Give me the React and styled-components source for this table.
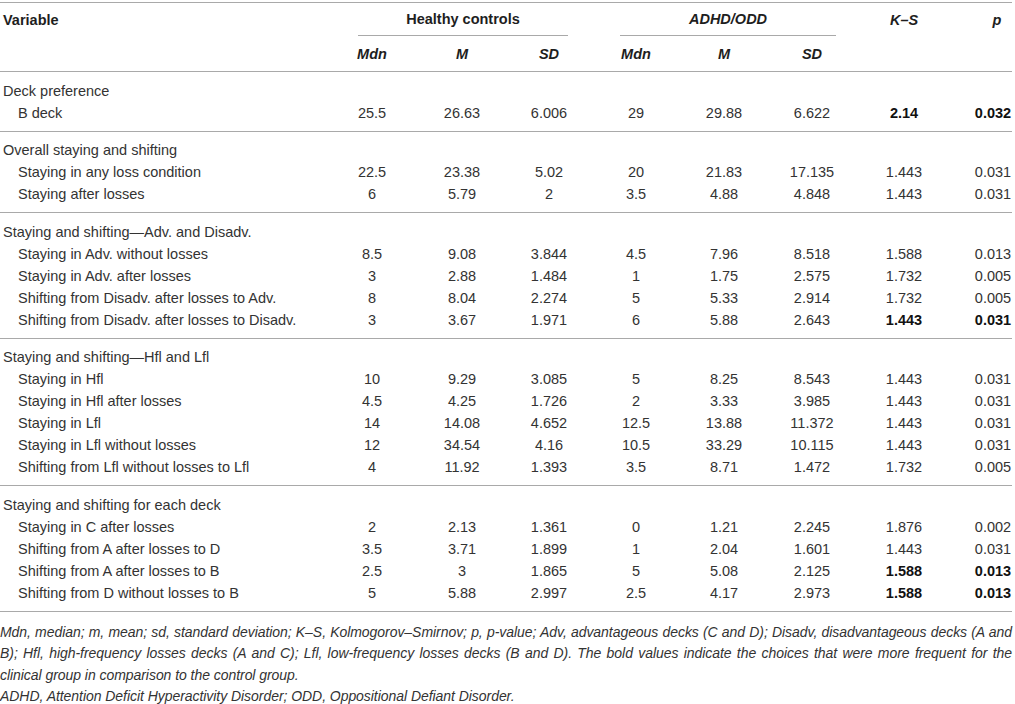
import React from 'react'
import styled, { createGlobalStyle } from 'styled-components'

const GlobalStyle = createGlobalStyle`
  body {
    margin: 0;
    background: #fff;
    font-family: "Liberation Sans", Arial, sans-serif;
    color: #333;
  }
`;

const Page = styled.div`
  width: 1012px;
  padding-top: 2px;
`;

const Table = styled.table`
  width: 1012px;
  table-layout: fixed;
  border-collapse: collapse;
  font-size: 14.5px;
  border-top: 1px solid #a9a9a9;
`;

const Head = styled.thead`
  tr:first-child th { height: 32px; }
  tr:last-child th { height: 35px; }
  tr:last-child { border-bottom: 1px solid #a9a9a9; }
`;

const HeadCell = styled.th`
  padding: 0 0 0 ${p => (p.$left ? 3 : p.$shift || 0)}px;
  font-weight: bold;
  font-style: ${p => (p.$italic ? 'italic' : 'normal')};
  text-align: ${p => (p.$left ? 'left' : 'center')};
  vertical-align: middle;
  color: #1e1e1e;
`;

const GroupTitle = styled.div`
  margin: 0 22px 0 30px;
  height: 32px;
  line-height: 32px;
  border-bottom: 1px solid #a9a9a9;
  font-style: ${p => (p.$italic ? 'italic' : 'normal')};
`;

const Group = styled.tbody`
  border-bottom: 1px solid #a9a9a9;
  tr:first-child td { padding-top: 7.5px; }
  tr:last-child td { padding-bottom: 7px; }
`;

const Label = styled.td`
  height: 22px;
  line-height: 22px;
  padding: 0 0 0 ${p => (p.$sub ? '18px' : '3px')};
  white-space: nowrap;
`;

const Cell = styled.td`
  height: 22px;
  line-height: 22px;
  padding: 0 0 0 ${p => p.$shift || 0}px;
  text-align: center;
  font-weight: ${p => (p.$bold ? 'bold' : 'normal')};
  color: ${p => (p.$bold ? '#111' : 'inherit')};
`;

const Notes = styled.div`
  padding-top: 10.5px;
  font-size: 14px;
  letter-spacing: -0.05px;
  font-style: italic;
  line-height: 21.4px;
  text-align: justify;
  color: #333;
`;

const widths = [328, 88, 92, 82, 92, 84, 92, 92, 62];

const groups = [
  {
    title: 'Deck preference',
    rows: [['B deck', '25.5', '26.63', '6.006', '29', '29.88', '6.622', '2.14', '0.032', true]],
  },
  {
    title: 'Overall staying and shifting',
    rows: [
      ['Staying in any loss condition', '22.5', '23.38', '5.02', '20', '21.83', '17.135', '1.443', '0.031'],
      ['Staying after losses', '6', '5.79', '2', '3.5', '4.88', '4.848', '1.443', '0.031'],
    ],
  },
  {
    title: 'Staying and shifting\u2014Adv. and Disadv.',
    rows: [
      ['Staying in Adv. without losses', '8.5', '9.08', '3.844', '4.5', '7.96', '8.518', '1.588', '0.013'],
      ['Staying in Adv. after losses', '3', '2.88', '1.484', '1', '1.75', '2.575', '1.732', '0.005'],
      ['Shifting from Disadv. after losses to Adv.', '8', '8.04', '2.274', '5', '5.33', '2.914', '1.732', '0.005'],
      ['Shifting from Disadv. after losses to Disadv.', '3', '3.67', '1.971', '6', '5.88', '2.643', '1.443', '0.031', true],
    ],
  },
  {
    title: 'Staying and shifting\u2014Hfl and Lfl',
    rows: [
      ['Staying in Hfl', '10', '9.29', '3.085', '5', '8.25', '8.543', '1.443', '0.031'],
      ['Staying in Hfl after losses', '4.5', '4.25', '1.726', '2', '3.33', '3.985', '1.443', '0.031'],
      ['Staying in Lfl', '14', '14.08', '4.652', '12.5', '13.88', '11.372', '1.443', '0.031'],
      ['Staying in Lfl without losses', '12', '34.54', '4.16', '10.5', '33.29', '10.115', '1.443', '0.031'],
      ['Shifting from Lfl without losses to Lfl', '4', '11.92', '1.393', '3.5', '8.71', '1.472', '1.732', '0.005'],
    ],
  },
  {
    title: 'Staying and shifting for each deck',
    rows: [
      ['Staying in C after losses', '2', '2.13', '1.361', '0', '1.21', '2.245', '1.876', '0.002'],
      ['Shifting from A after losses to D', '3.5', '3.71', '1.899', '1', '2.04', '1.601', '1.443', '0.031'],
      ['Shifting from A after losses to B', '2.5', '3', '1.865', '5', '5.08', '2.125', '1.588', '0.013', true],
      ['Shifting from D without losses to B', '5', '5.88', '2.997', '2.5', '4.17', '2.973', '1.588', '0.013', true],
    ],
  },
];

const stats = ['Mdn', 'M', 'SD', 'Mdn', 'M', 'SD'];

export default function App() {
  return (
    <Page>
      <GlobalStyle />
      <Table>
        <colgroup>
          {widths.map((w, i) => (
            <col key={i} style={{ width: w }} />
          ))}
        </colgroup>
        <Head>
          <tr>
            <HeadCell $left>Variable</HeadCell>
            <HeadCell colSpan={3}>
              <GroupTitle>Healthy controls</GroupTitle>
            </HeadCell>
            <HeadCell colSpan={3}>
              <GroupTitle $italic>ADHD/ODD</GroupTitle>
            </HeadCell>
            <HeadCell $italic>K–S</HeadCell>
            <HeadCell $italic $shift={32}>p</HeadCell>
          </tr>
          <tr>
            <HeadCell />
            {stats.map((s, i) => (
              <HeadCell key={i} $italic>{s}</HeadCell>
            ))}
            <HeadCell />
            <HeadCell />
          </tr>
        </Head>
        {groups.map(g => (
          <Group key={g.title}>
            <tr>
              <Label colSpan={9}>{g.title}</Label>
            </tr>
            {g.rows.map(r => (
              <tr key={r[0]}>
                <Label $sub>{r[0]}</Label>
                {r.slice(1, 7).map((v, i) => (
                  <Cell key={i}>{v}</Cell>
                ))}
                <Cell $bold={r[9]}>{r[7]}</Cell>
                <Cell $bold={r[9]} $shift={24}>{r[8]}</Cell>
              </tr>
            ))}
          </Group>
        ))}
      </Table>
      <Notes>
        Mdn, median; m, mean; sd, standard deviation; K–S, Kolmogorov–Smirnov; p, p-value; Adv, advantageous decks (C and D); Disadv, disadvantageous decks (A and B); Hfl, high-frequency losses decks (A and C); Lfl, low-frequency losses decks (B and D). The bold values indicate the choices that were more frequent for the clinical group in comparison to the control group.
        <br />
        ADHD, Attention Deficit Hyperactivity Disorder; ODD, Oppositional Defiant Disorder.
      </Notes>
    </Page>
  )
}
